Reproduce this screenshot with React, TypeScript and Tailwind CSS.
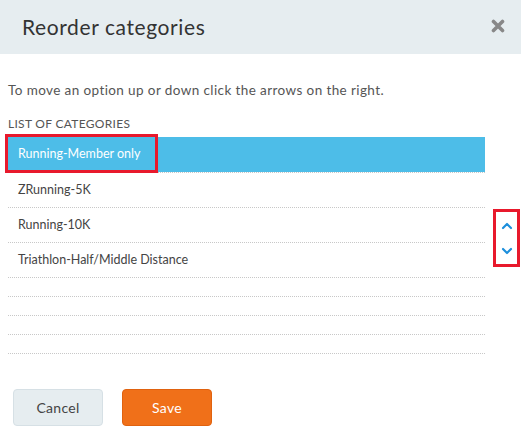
import { ChevronUp, ChevronDown } from "lucide-react";

const rows = ["ZRunning-5K", "Running-10K", "Triathlon-Half/Middle Distance"];

export default function App() {
  return (
    <div className="w-[521px] h-[441px] bg-white font-['Lato','Open_Sans',sans-serif] text-[#444]">
      {/* Header */}
      <div className="h-[54px] bg-[#e6edf0] flex items-center justify-between pl-[22px] pr-[16px]">
        <h1 className="text-[21px] text-[#333] tracking-[0.6px]">Reorder categories</h1>
        <svg width="14" height="14" viewBox="0 0 14 14" className="mb-[2px]">
          <path d="M2.5 2.5 L11.5 11.5 M11.5 2.5 L2.5 11.5" stroke="#888" strokeWidth="3.6" strokeLinecap="round" />
        </svg>
      </div>

      <div className="px-[8px]">
        <p className="mt-[26px] text-[13.5px] text-[#555] tracking-[0.4px]">
          To move an option up or down click the arrows on the right.
        </p>
        <div className="mt-[17px] text-[12px] text-[#555] uppercase leading-[14px] tracking-[0.3px]">List of categories</div>

        <div className="flex mt-[6px]">
          <div className="w-[477px] shrink-0">
            {/* selected row */}
            <div className="relative h-[35px] bg-[#4dbde8] flex items-center pl-[10px] text-white text-[12.5px]">
              Running-Member only
              <div className="absolute left-[-3px] top-[-3px] w-[153px] h-[39px] border-[3px] border-[#e8192c]" />
            </div>
            {rows.map((r) => (
              <div
                key={r}
                className="h-[35px] border-t border-dotted border-[#c8c8c8] flex items-center pl-[10px] text-[12.5px] text-[#444]"
              >
                {r}
              </div>
            ))}
            {[0, 1, 2, 3].map((i) => (
              <div key={i} className="h-[19px] border-t border-dotted border-[#c8c8c8]" />
            ))}
            <div className="border-t border-dotted border-[#c8c8c8]" />
          </div>

          <div className="shrink-0 ml-[8px] mt-[72px] w-[27px] h-[58px] border-[3px] border-[#e8192c] flex flex-col items-center justify-center gap-[9px]">
            <ChevronUp size={16} strokeWidth={3.2} className="text-[#1d8fdc]" />
            <ChevronDown size={16} strokeWidth={3.2} className="text-[#1d8fdc]" />
          </div>
        </div>

        <div className="mt-[35px] flex gap-[19px] pl-[5px]">
          <button className="w-[90px] h-[37px] rounded-[4px] bg-[#e6edf0] border border-[#d6e0e5] text-[14px] text-[#444] tracking-[0.3px]">
            Cancel
          </button>
          <button className="w-[90px] h-[37px] rounded-[4px] bg-[#f07019] border border-[#e0620f] text-[14px] text-white tracking-[0.3px]">
            Save
          </button>
        </div>
      </div>
    </div>
  );
}
